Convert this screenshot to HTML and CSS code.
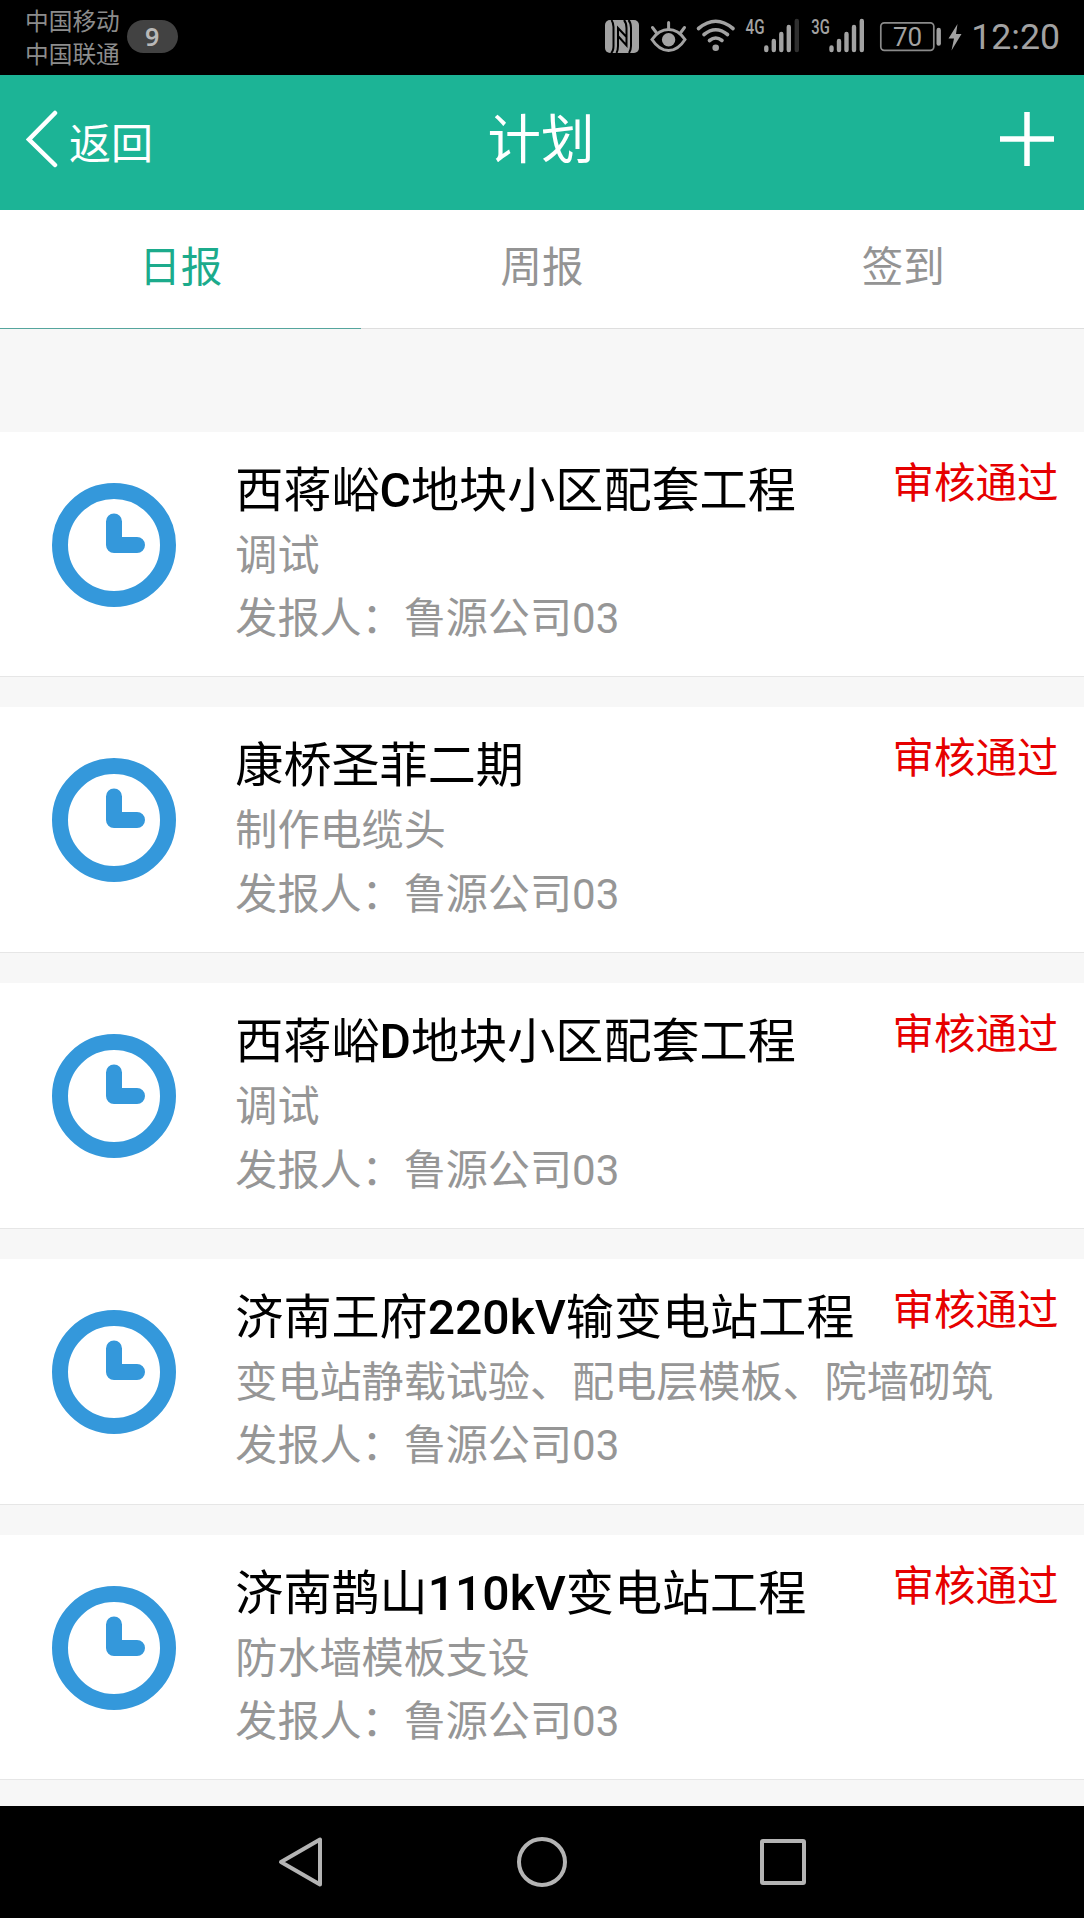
FILE: index.html
```
<!DOCTYPE html>
<html lang="zh-CN">
<head>
<meta charset="utf-8">
<title>计划</title>
<link rel="stylesheet" href="styles.css">
</head>
<body>
<svg class="defs" width="0" height="0">
<symbol id="clock" viewBox="0 0 124 124">
<circle cx="62" cy="62" r="54" fill="none" stroke="#3498db" stroke-width="16"/>
<path d="M62 38.5V62h23" fill="none" stroke="#3498db" stroke-width="16" stroke-linecap="round" stroke-linejoin="round"/>
</symbol>
</svg>

<div class="statusbar">
<div class="carriers">
<span>中国移动</span>
<span>中国联通</span>
</div>
<span class="count">9</span>
<svg class="indicators" width="372" height="75" viewBox="600 0 372 75">
<!--NFC-->
<rect x="605" y="20" width="34" height="33" rx="5" fill="#a2a2a2"/>
<path d="M611.500 20Q613.500 23 613.500 27V46Q613.500 51 611 53M616.500 53Q618 50 618 46V28L627 37.500M618 36L626.500 45.500V28Q626.500 23 624 20M628.500 20Q631 23 631 28V46Q631 50 629 53" fill="none" stroke="#000" stroke-width="2"/>
<!--Eye comfort-->
<g fill="none" stroke="#a2a2a2" stroke-width="3" stroke-linecap="round">
<path d="M652 39.500Q659 29.500 668.600 29.500T685 39.500Q678 50.500 668.600 50.500T652 39.500ZM668.600 22.500V28M652.500 27.500L657 33.500M684.500 27.500L680 33.500"/>
</g>
<circle cx="668.600" cy="39.700" r="6.700" fill="#a2a2a2"/>
<!--Wi-Fi-->
<g fill="none" stroke="#a2a2a2" stroke-width="3.600" stroke-linecap="round">
<path d="M698.500 28.500Q715.700 14 733 28.500M704 34.500Q715.700 25 727.500 34.500M709.500 40.500Q715.700 35.500 722 40.500"/>
</g>
<circle cx="715.700" cy="47.800" r="3.300" fill="#a2a2a2"/>
<!--Signal-->
<text class="net" x="745.500" y="34" textLength="19" lengthAdjust="spacingAndGlyphs">4G</text>
<path class="bars" d="M766.300 47.500V50M773.800 41V50M781.300 34V50M788.800 27V50"/>
<path class="bars off" d="M796.800 21V50"/>
<text class="net" x="811.300" y="34" textLength="18.500" lengthAdjust="spacingAndGlyphs">3G</text>
<path class="bars" d="M831.500 47.500V50M839 41V50M846.500 34V50M854 27V50M861.800 21V50"/>
<!--Battery-->
<rect x="880.800" y="22.800" width="53" height="27.500" rx="3.500" fill="none" stroke="#8a8a8a" stroke-width="1.700"/>
<path class="bars" d="M938.700 30V43.500"/>
<text class="level" x="907.500" y="46" text-anchor="middle">70</text>
<path d="M957.500 24L948.500 38.500H954L951.500 50.500 961.500 34H956Z" fill="#a2a2a2"/>
</svg>
<span class="time">12:20</span>
</div>

<header class="header">
<a class="back">
<svg width="32" height="58" viewBox="0 0 32 58"><path d="M29 3L3 29.500 29 55" fill="none" stroke="#fff" stroke-width="4.500" stroke-linecap="round"/></svg>
<span>返回</span>
</a>
<h1>计划</h1>
<a class="add">
<svg width="54" height="54" viewBox="0 0 54 54"><path d="M27 0V54M0 27H54" stroke="#fff" stroke-width="5.500"/></svg>
</a>
</header>

<nav class="tabs">
<a class="tab active">日报</a>
<a class="tab">周报</a>
<a class="tab">签到</a>
</nav>

<main class="list">
<article class="item">
<svg class="clock"><use href="#clock"/></svg>
<div class="info">
<h2>西蒋峪<b>C</b>地块小区配套工程</h2>
<p>调试</p>
<p>发报人：鲁源公司03</p>
</div>
<span class="state">审核通过</span>
</article>
<article class="item">
<svg class="clock"><use href="#clock"/></svg>
<div class="info">
<h2>康桥圣菲二期</h2>
<p>制作电缆头</p>
<p>发报人：鲁源公司03</p>
</div>
<span class="state">审核通过</span>
</article>
<article class="item">
<svg class="clock"><use href="#clock"/></svg>
<div class="info">
<h2>西蒋峪<b>D</b>地块小区配套工程</h2>
<p>调试</p>
<p>发报人：鲁源公司03</p>
</div>
<span class="state">审核通过</span>
</article>
<article class="item">
<svg class="clock"><use href="#clock"/></svg>
<div class="info">
<h2>济南王府<b>220kV</b>输变电站工程</h2>
<p>变电站静载试验、配电层模板、院墙砌筑</p>
<p>发报人：鲁源公司03</p>
</div>
<span class="state">审核通过</span>
</article>
<article class="item">
<svg class="clock"><use href="#clock"/></svg>
<div class="info">
<h2>济南鹊山<b>110kV</b>变电站工程</h2>
<p>防水墙模板支设</p>
<p>发报人：鲁源公司03</p>
</div>
<span class="state">审核通过</span>
</article>
</main>

<footer class="navbar">
<svg width="52" height="52" viewBox="0 0 52 52"><path d="M45 3.500V48.500L6 26Z"/></svg>
<svg width="52" height="52" viewBox="0 0 52 52"><circle cx="26" cy="26" r="23"/></svg>
<svg width="52" height="52" viewBox="0 0 52 52"><rect x="5" y="5" width="42" height="42" rx="1"/></svg>
</footer>
</body>
</html>
```
FILE: styles.css
```
* {
  box-sizing: border-box;
}
body {
  display: flex;
  flex-direction: column;
  width: 1084px;
  height: 1918px;
  margin: 0;
  overflow: hidden;
  background: #f7f7f7;
  color: #000;
  font-family: Roboto, "Noto Sans CJK SC", sans-serif;
}
h1, h2, p {
  margin: 0;
  font-weight: normal;
}
.defs {
  display: none;
}

.statusbar {
  display: flex;
  flex: none;
  align-items: center;
  height: 75px;
  padding: 0 24px 0 25px;
  background: #000;
  color: #a2a2a2;
}
.carriers {
  display: flex;
  flex-direction: column;
  padding-top: 2px;
  color: #8c8c8c;
  font-size: 23.7px;
  line-height: 33px;
}
.count {
  width: 51px;
  height: 33px;
  margin: 0 0 2px 7px;
  border-radius: 17px;
  background: #424242;
  color: #b8b8b8;
  font: 600 25px/33px "Noto Sans", sans-serif;
  text-align: center;
}
.indicators {
  flex: none;
  margin: 0 -1px 0 auto;
}
.net {
  fill: #a2a2a2;
  font-size: 20px;
  font-weight: 500;
}
.level {
  fill: #a2a2a2;
  font-size: 26px;
}
.bars {
  fill: none;
  stroke: #a2a2a2;
  stroke-width: 4.4px;
  stroke-linecap: round;
}
.bars.off {
  stroke: #303030;
}
.time {
  font-size: 35.7px;
  line-height: 75px;
}

.header {
  display: grid;
  flex: none;
  grid-template-columns: 1fr auto 1fr;
  align-items: center;
  height: 135px;
  padding: 0 30px 8px 26px;
  background: #1cb496;
  color: #fff;
}
.back {
  display: flex;
  align-items: center;
  gap: 11px;
  font-size: 42px;
  line-height: 50px;
}
.back span {
  padding-top: 12px;
}
.header h1 {
  padding: 4px 0 0 2px;
  font-size: 53.5px;
  line-height: 80px;
}
.add {
  display: flex;
  justify-content: flex-end;
}

.tabs {
  display: flex;
  flex: none;
  height: 119px;
  background: #fff;
}
.tab {
  flex: 1;
  border-bottom: 1px solid #dedede;
  color: #949494;
  font-size: 41.5px;
  line-height: 116px;
  text-align: center;
}
.tab.active {
  border-color: #55a59d;
  color: #1cab8c;
}

.list {
  display: flex;
  flex: 1;
  flex-direction: column;
  gap: 30px;
  padding-top: 102.500px;
}
.item {
  display: flex;
  flex: none;
  height: 245.800px;
  padding: 26px 25.5px 0 52.300px;
  border-bottom: 1px solid #e6e6e6;
  background: #fff;
}
.clock {
  flex: none;
  width: 124px;
  height: 124px;
  margin-top: 25px;
}
.info {
  flex: 1;
  margin-left: 59px;
  white-space: nowrap;
}
.info h2 {
  font-size: 48.1px;
  line-height: 66px;
}
.info b {
  font-weight: 500;
}
.info p {
  color: #969696;
  font-size: 42.1px;
  line-height: 63.500px;
}
.state {
  width: 166px;
  margin-left: -166px;
  color: #e60000;
  font-size: 41.500px;
  line-height: 52px;
}

.navbar {
  display: flex;
  flex: none;
  align-items: center;
  justify-content: center;
  gap: 189px;
  height: 112px;
  background: #000;
}
.navbar svg {
  fill: none;
  stroke: #b4b4b4;
  stroke-width: 4px;
  stroke-linejoin: round;
}
```
